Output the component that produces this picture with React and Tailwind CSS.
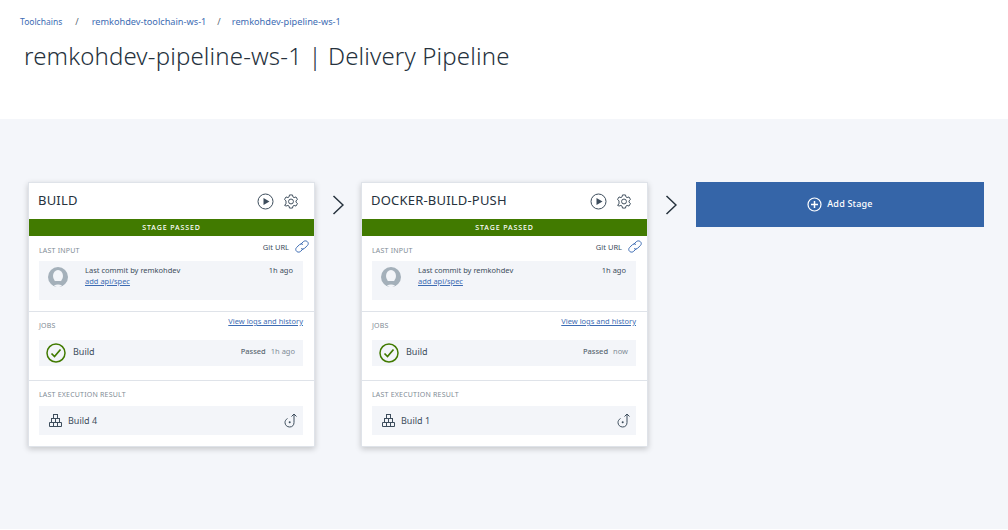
const font = { fontFamily: '"Noto Sans", "Open Sans", sans-serif' };

const PlayIcon = () => (
  <svg width="17" height="17" viewBox="0 0 17 17" fill="none" stroke="#3d4d5c" strokeWidth="1">
    <circle cx="8.5" cy="8.5" r="7.5" />
    <path d="M6.5 5v7l6-3.5z" fill="#3d4d5c" stroke="none" />
  </svg>
);

const GearIcon = () => (
  <svg width="14" height="15" viewBox="0 0 16 17" fill="none" stroke="#3d4d5c" strokeWidth="1.100" strokeLinejoin="round">
    <path d="M6.3 1h3.4l.5 2.2 1.3.8 2.2-.7 1.7 2.9-1.700 1.500v1.600l1.700 1.500-1.700 2.900-2.200-.7-1.300.8-.5 2.200H6.300l-.5-2.200-1.300-.8-2.200.7L.6 12.800l1.700-1.500V7.700L.6 6.200l1.700-2.900 2.200.7 1.300-.8z" />
    <circle cx="8" cy="8.500" r="2.800" />
  </svg>
);

const Chevron = ({ wide }) => (
  <div className={wide ? "w-[48px] pl-[17px] pt-[13px] shrink-0" : "w-[46px] pl-[17px] pt-[13px] shrink-0"}>
    <svg width="12" height="20" viewBox="0 0 12 20" fill="none" stroke="#26323d" strokeWidth="1.500">
      <path d="M1.500 1l9.500 9-9.500 9" />
    </svg>
  </div>
);

const LinkIcon = () => (
  <svg width="16" height="13" viewBox="0 0 16 13" fill="none" stroke="#3d6cb3" strokeWidth="1">
    <path d="M6.500 4.500L9.300 1.700c1-1 2.700-1.100 3.900-.2 1.300 1 1.400 2.800.3 3.900L10.600 8.300c-1 1-2.600 1-3.600.1" />
    <path d="M9.400 8.500L6.700 11.300c-1 1-2.700 1.100-3.900.2-1.300-1-1.400-2.800-.3-3.900L5.400 4.700c1-1 2.600-1 3.600-.1" />
  </svg>
);

const Avatar = () => (
  <svg width="20" height="20" viewBox="0 0 20 20" className="shrink-0 mt-[2px]">
    <circle cx="10" cy="10" r="10" fill="#a4b0ba" />
    <ellipse cx="10" cy="9" rx="5" ry="6" fill="#f3f5f9" />
    <path d="M7.500 14h5c.3 1.500 2 2.600 3.800 3.200C14.600 19 12.400 20 10 20s-4.600-1-6.300-2.800c1.800-.6 3.500-1.700 3.800-3.200z" fill="#a4b0ba" />
    <path d="M6 18.400C7.200 19.500 8.500 20 10 20s2.800-.5 4-1.600c-1.300-.5-2.600-.8-4-.8s-2.700.3-4 .8z" fill="#f3f5f9" />
  </svg>
);

const CheckIcon = () => (
  <svg width="20" height="20" viewBox="0 0 20 20" fill="none" className="shrink-0">
    <circle cx="10" cy="10" r="9" stroke="#417a00" strokeWidth="1.500" />
    <path d="M5.500 10.500l3 3 6-7" stroke="#417a00" strokeWidth="1.700" />
  </svg>
);

const BlocksIcon = () => (
  <svg width="13" height="13" viewBox="0 0 13 13" fill="none" stroke="#3d4d5c" strokeWidth="1" className="shrink-0">
    <rect x="4.500" y="0.500" width="4" height="4" />
    <rect x="2.500" y="4.500" width="4" height="4" />
    <rect x="6.500" y="4.500" width="4" height="4" />
    <path d="M.5 8.500h12v4H.5zM4.500 8.500v4M8.500 8.500v4" />
  </svg>
);

const RedeployIcon = () => (
  <svg width="15" height="15" viewBox="0 0 15 15" fill="none" stroke="#3d4d5c" strokeWidth="1">
    <path d="M3.500 5.500C1.800 6.500 1 8 1 9.500 1 12 3 14 5.700 14c2.800 0 4.300-2 4.300-4.500V1" />
    <path d="M7.500 3.500L10 1l2.500 2.500" />
    <circle cx="5.700" cy="9.300" r="1" fill="#3d4d5c" stroke="none" />
  </svg>
);

const Label = ({ children }) => (
  <div className="text-[7px] leading-[10px] tracking-[0.2px] text-[#7f8c96]">{children}</div>
);

const StageCard = ({ name, jobTime, build }) => (
  <div className="w-[287px] h-[265px] shrink-0 bg-white border border-[#dfe3e9] shadow-[0_2px_6px_rgba(0,0,0,0.2)] flex flex-col">
    <div className="h-[36px] flex items-center justify-between pl-[9px] pr-[16px] shrink-0">
      <span className="text-[13px] tracking-[0.2px] text-[#26323d]">{name}</span>
      <div className="flex items-center gap-[10px]">
        <PlayIcon />
        <GearIcon />
      </div>
    </div>
    <div className="h-[17px] pt-[1px] shrink-0 bg-[#417a00] flex items-center justify-center text-[7px] font-medium tracking-[0.9px] text-white">
      STAGE PASSED
    </div>

    <div className="h-[76px] shrink-0 border-b border-[#dfe3e9] pl-[10px] pr-[11px] relative">
      <div className="pt-[10px]"><Label>LAST INPUT</Label></div>
      <div className="absolute right-[4px] top-[3px] flex items-center gap-[5px]">
        <span className="text-[7.500px] pt-[3px] text-[#3d4d5c]">Git URL</span>
        <LinkIcon />
      </div>
      <div className="mt-[5px] h-[39px] bg-[#f3f5f9] flex pl-[9px] pr-[10px] pt-[4px] gap-[17px]">
        <Avatar />
        <div className="flex-1 text-[7.500px] leading-[11px]">
          <div className="flex justify-between text-[#3d4d5c]">
            <span>Last commit by remkohdev</span>
            <span>1h ago</span>
          </div>
          <a className="text-[#3d6cb3] underline">add api/spec</a>
        </div>
      </div>
    </div>

    <div className="h-[69px] shrink-0 border-b border-[#dfe3e9] pl-[10px] pr-[11px] relative">
      <div className="pt-[9px]"><Label>JOBS</Label></div>
      <a className="absolute right-[11px] top-[4px] text-[7.500px] text-[#3d6cb3] underline">View logs and history</a>
      <div className="mt-[9px] h-[26px] bg-[#f3f5f9] flex items-center pl-[7px] pr-[8px]">
        <CheckIcon />
        <span className="ml-[7px] mb-[2px] text-[9px] text-[#3d4d5c]">Build</span>
        <span className="ml-auto mb-[3px] text-[7.500px] font-medium text-[#5a6872]">Passed</span>
        <span className="ml-[5px] mb-[3px] text-[7.500px] text-[#7f8c96]">{jobTime}</span>
      </div>
    </div>

    <div className="flex-1 pl-[10px] pr-[11px]">
      <div className="pt-[9px]"><Label>LAST EXECUTION RESULT</Label></div>
      <div className="mt-[6px] h-[29px] bg-[#f3f5f9] flex items-center pl-[10px] pr-[4px]">
        <BlocksIcon />
        <span className="ml-[6px] text-[9px] text-[#3d4d5c]">{build}</span>
        <span className="ml-auto"><RedeployIcon /></span>
      </div>
    </div>
  </div>
);

export default function App() {
  return (
    <div className="w-[1008px] h-[530px] bg-white overflow-hidden flex flex-col" style={font}>
      <header className="h-[119px] shrink-0 pl-[20px]">
        <nav className="pt-[16px] flex items-center text-[9.200px] leading-[11px] text-[#3d6cb3]">
          <a className="text-[8.500px]">Toolchains</a>
          <span className="mx-[13px] text-[#5a6872]">/</span>
          <a>remkohdev-toolchain-ws-1</a>
          <span className="mx-[11px] text-[#5a6872]">/</span>
          <a>remkohdev-pipeline-ws-1</a>
        </nav>
        <h1 className="ml-[4px] mt-[13px] text-[24px] tracking-[0.15px] leading-[32px] font-light text-[#26323d]">
          remkohdev-pipeline-ws-1 | Delivery Pipeline
        </h1>
      </header>
      <main className="h-[410px] shrink-0 bg-[#f4f6fa] pl-[28px] pt-[63px] flex items-start">
        <StageCard name="BUILD" jobTime="1h ago" build="Build 4" />
        <Chevron />
        <StageCard name="DOCKER-BUILD-PUSH" jobTime="now" build="Build 1" />
        <Chevron wide />
        <button className="w-[288px] h-[45px] pb-[1px] shrink-0 bg-[#3565a8] text-white flex items-center justify-center gap-[5px] text-[9px] font-medium tracking-[0.2px]">
          <svg width="15" height="15" viewBox="0 0 15 15" fill="none" stroke="#fff">
            <circle cx="7.500" cy="7.500" r="6.500" strokeWidth="1.200" />
            <path d="M7.500 4v7M4 7.500h7" strokeWidth="1.500" />
          </svg>
          Add Stage
        </button>
      </main>
    </div>
  );
}
